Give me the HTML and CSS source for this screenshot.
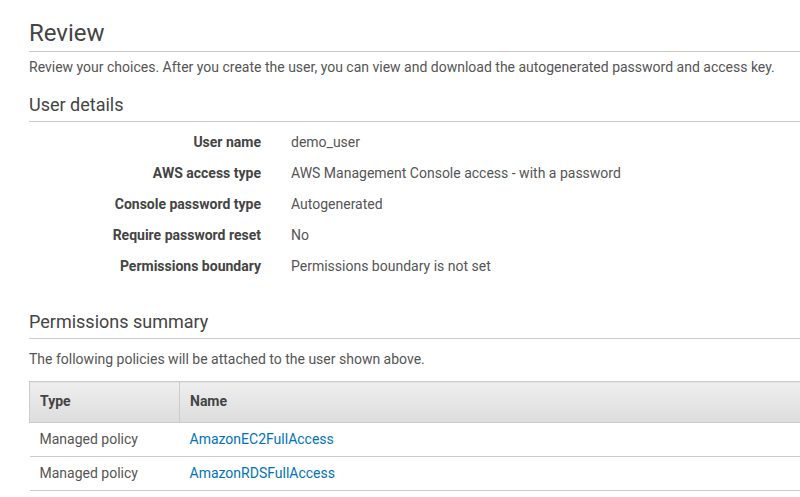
FILE: index.html
```html
<!DOCTYPE html>
<html>
<head>
<meta charset="utf-8">
<link rel="stylesheet" href="styles.css">
</head>
<body>
<div class="page">
  <h1 class="title">Review</h1>
  <p class="desc">Review your choices. After you create the user, you can view and download the autogenerated password and access key.</p>

  <h2 class="section">User details</h2>
  <div class="details">
    <div class="label">User name</div><div class="value">demo_user</div>
    <div class="label">AWS access type</div><div class="value">AWS Management Console access - with a password</div>
    <div class="label">Console password type</div><div class="value">Autogenerated</div>
    <div class="label">Require password reset</div><div class="value">No</div>
    <div class="label">Permissions boundary</div><div class="value">Permissions boundary is not set</div>
  </div>

  <h2 class="section section-perm">Permissions summary</h2>
  <p class="desc desc-perm">The following policies will be attached to the user shown above.</p>

  <table class="policies">
    <thead>
      <tr><th class="col-type">Type</th><th>Name</th></tr>
    </thead>
    <tbody>
      <tr><td>Managed policy</td><td><a href="#">AmazonEC2FullAccess</a></td></tr>
      <tr><td>Managed policy</td><td><a href="#">AmazonRDSFullAccess</a></td></tr>
    </tbody>
  </table>
</div>
</body>
</html>
```
FILE: styles.css
```css
html, body {
  margin: 0;
  padding: 0;
  background: #fff;
  overflow: hidden;
}
body {
  font-family: Roboto, "Liberation Sans", Arial, sans-serif;
  color: #444;
  font-size: 14px;
}
.page {
  padding-left: 29px;
  width: 800px;
}
.title {
  margin: 0;
  padding-top: 19px;
  padding-bottom: 4px;
  font-size: 24px;
  line-height: 28px;
  font-weight: 400;
  border-bottom: 1px solid #ccc;
}
.desc {
  margin: 5px 0 0;
  line-height: 20px;
  color: #555;
}
.section {
  margin: 16px 0 0;
  padding-bottom: 4px;
  font-size: 18px;
  line-height: 24px;
  font-weight: 400;
  border-bottom: 1px solid #ccc;
}
.details {
  display: grid;
  grid-template-columns: 232px 1fr;
  column-gap: 30px;
  row-gap: 11px;
  margin-top: 10px;
  line-height: 20px;
}
.label {
  text-align: right;
  font-weight: 700;
}
.value {
  color: #555;
}
.section-perm {
  margin-top: 34px;
}
.desc-perm {
  margin-top: 10px;
}
.policies {
  margin-top: 12px;
  border-collapse: collapse;
  width: 800px;
}
.policies th {
  text-align: left;
  font-weight: 700;
  line-height: 20px;
  padding: 9px 10px 11px;
  background: linear-gradient(#eee, #ddd);
  border: 1px solid #ccc;
}
.policies th.col-type {
  width: 129px;
}
.policies td {
  line-height: 20px;
  padding: 6px 10px 7px;
  border-bottom: 1px solid #ccc;
  color: #555;
}
.policies a {
  color: #0073bb;
  text-decoration: none;
}
```
